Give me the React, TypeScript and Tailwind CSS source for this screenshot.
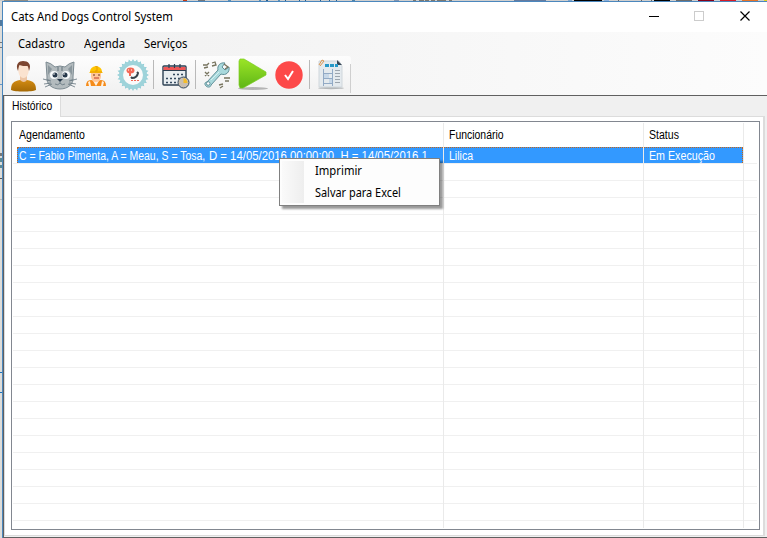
import React from "react";

const topMarks = [
  [4, 24, "#918d85"], [183, 4, "#c33a14"], [198, 7, "#74777b"], [228, 3, "#5a8fb5"], [259, 2, "#5a8fb5"],
  [266, 2, "#285f8d"], [278, 2, "#5a8fb5"], [285, 1, "#285f8d"], [299, 1, "#285f8d"], [305, 1, "#285f8d"],
  [320, 1, "#285f8d"], [329, 1, "#285f8d"], [336, 1, "#285f8d"], [352, 3, "#4c83aa"], [394, 5, "#8395b0"],
  [413, 3, "#7b7870"], [419, 5, "#7b7870"], [425, 4, "#7b7870"], [431, 4, "#7b7870"], [437, 9, "#7b7870"],
  [449, 3, "#7b7870"], [514, 32, "#647b9f"], [568, 4, "#7fa5cc"], [574, 28, "#000000"], [604, 5, "#8ab0dd"],
  [618, 1, "#666666"], [641, 1, "#666666"], [651, 1, "#666666"], [654, 16, "#000000"], [676, 16, "#6b6b6b"],
  [698, 16, "#84001a"], [720, 16, "#d51c28"], [742, 16, "#e6752a"], [764, 3, "#e5d420"],
] as const;

const sideMarks = [
  [20, 6, "#527a9e"], [42, 1, "#777777"], [47, 1, "#777777"], [84, 1, "#6494c4"], [153, 3, "#777777"],
  [158, 4, "#5c8a94"], [165, 3, "#5c8a94"], [178, 1, "#555555"], [199, 1, "#bbbbbb"], [372, 1, "#1e73b9"], [392, 1, "#1e73b9"],
] as const;

const cell = "block w-max origin-left whitespace-pre font-['Liberation_Sans',sans-serif] text-[12px] leading-[16px]";
const ui = "block w-max origin-left whitespace-pre font-['Noto_Sans',sans-serif] text-[12px]";

function Person() {
  return (
    <svg width="28" height="32" viewBox="0 0 28 32">
      <defs><linearGradient id="coat" x2="0" y2="1"><stop stopColor="#d28b12" /><stop offset="1" stopColor="#a66a05" /></linearGradient></defs>
      <path d="M1 30c0-6 2-9 9-10h7c7 1 9 4 9 10-4 2-21 2-25 0Z" fill="url(#coat)" />
      <path d="M10 16h7v4q-3 4-7 0Z" fill="#edc6a7" />
      <path d="M8 7c0-6 11-6 11 0 0 7-2 11-5.500 11S8 14 8 7Z" fill="#fbe3d0" />
      <path d="M8 11C5 4 9 1 13 1c5 0 9 3 6 10-.5-2-.5-4-1.500-5-3 0-6 0-8-1-1 2-1 4-1.500 6Z" fill="#7c4530" />
    </svg>
  );
}

function Cat() {
  return (
    <svg width="34" height="30" viewBox="0 0 34 30">
      <path d="M4 16 3 1q5 1 9 5 5-2 10 0 4-4 9-5l-1 15c1 7-5 12-13 12S3 23 4 16Z" fill="#b3bbbe" stroke="#7d8b92" />
      <path d="m5 4 4 4-4 6Zm24 0-4 4 4 6ZM14 6h2v4h-2Zm4 0h2v4h-2ZM4 18l4 1-4 1Zm26 0-4 1 4 1Z" fill="#8b979d" />
      <circle cx="11" cy="14" r="4" fill="#f7fafb" /><circle cx="23" cy="14" r="4" fill="#f7fafb" />
      <circle cx="12" cy="14" r="2.500" fill="#26384a" /><circle cx="22" cy="14" r="2.500" fill="#26384a" />
      <circle cx="11" cy="13" r=".8" fill="white" /><circle cx="21" cy="13" r=".8" fill="white" />
      <path d="M14 18h6l-3 3Z" fill="#26384a" />
      <path d="M17 20v2q-2 3-5 1m5-1q2 3 5 1M0 18l8 2m-7 3 7-1m-6 4 7-3M34 18l-8 2m7 3-7-1m6 4-7-3" fill="none" stroke="#63747d" strokeWidth=".8" />
    </svg>
  );
}

function Worker() {
  return (
    <svg width="20" height="20" viewBox="0 0 20 20">
      <path d="M0 20q0-6 5-6l5 1 5-1q5 0 5 6Z" fill="#f58b19" />
      <path d="m6 13 4 7 4-7ZM2 16l2-1 1 5H3Zm16 0-2-1-1 5h2Z" fill="#fff1df" />
      <path d="M5 6h10v5q-1 5-5 5t-5-5Z" fill="#ffc799" />
      <path d="M4 6q0-5 6-6 6 1 6 6l1 1H3Z" fill="#ffc400" />
      <path d="M9 0h2v5H9M4 6h12" stroke="#e59a08" fill="none" />
      <path d="M7 9h2m3 0h2" stroke="#6b3521" /><path d="M8 12h5" stroke="#be3c2d" />
    </svg>
  );
}

function Gear() {
  const teeth = Array.from({ length: 24 }, (_, i) => i * 15);
  return (
    <svg width="32" height="32" viewBox="0 0 32 32">
      {teeth.map((a) => <path key={a} d="M14.500 3 16 0l1.500 3Z" fill="#8bcbd4" transform={`rotate(${a} 16 16)`} />)}
      <circle cx="16" cy="16" r="14" fill="#9ed3da" /><circle cx="16" cy="16" r="10" fill="#fafafa" />
      <ellipse cx="13.500" cy="11.500" rx="4" ry="3" fill="#f36856" /><path d="M13 14v3" stroke="#f36856" strokeWidth="2" />
      <path d="M11 11h1m2 0h1" stroke="#fff" />
      <path d="m14 18 1 1q5 0 6-5l-1-1" fill="none" stroke="#37424b" strokeWidth="2" /><path d="M14 21.500h2m1 0h2m1 0h2" stroke="#f36856" />
    </svg>
  );
}

function CalendarClock() {
  return (
    <svg width="28" height="26" viewBox="0 0 28 26">
      <rect x="1" y="3" width="23" height="19" rx="1" fill="#e8edf0" stroke="#2d4053" strokeWidth="1.400" />
      <path d="M1.500 4h22v3h-22Z" fill="#ef5656" /><path d="M1 7.500h23M7 1v4m5.500-4v4M18 1v4" stroke="#2d4053" strokeWidth="1.200" />
      <path d="M11 11.500h11M4 15.500h18M4 19.500h11" stroke="#34495e" strokeWidth="1.600" strokeDasharray="2 2" />
      <circle cx="21.500" cy="19.500" r="5.500" fill="#cabfb0" stroke="#34495e" /><path d="M21.500 20v-5q4 1 4 5Z" fill="#f5bd28" />
    </svg>
  );
}

function Wrench() {
  return (
    <svg width="28" height="28" viewBox="0 0 28 28">
      <path d="m4 21 11-12c-1-4 2-8 7-7l-3 4 3 3 4-3c1 5-3 9-8 7L8 24c0 2-3 3-5 1s-1-4 1-4Z" fill="#a9d9dd" stroke="#608f98" />
      <circle cx="5.200" cy="22.500" r="1.800" fill="#fff" stroke="#608f98" /><path d="m8 19 8-8" stroke="#d5f1f1" />
      <g fill="none" stroke="#77745f" strokeWidth="1.300">
        <path d="M0 4h4l2-2M1 7l4-1M9 2l3-1 1 3-4 1M2 11l4 4m0-4-4 4M21 17h6m-5 3h4m-10 4 4-1m-3 4 3-2M21 3l4 3-3 2" />
      </g>
    </svg>
  );
}

function Play() {
  return (
    <svg width="32" height="33" viewBox="0 0 32 33">
      <defs><linearGradient id="play" x2="0" y2="1"><stop stopColor="#9be426" /><stop offset="1" stopColor="#5fb617" /></linearGradient></defs>
      <ellipse cx="16" cy="30.500" rx="15" ry="1.400" fill="#b4b4b4" />
      <path d="M3 1h4l22 13v3L6 30H3L2 27V3Z" fill="url(#play)" stroke="#7bcc24" strokeWidth=".7" />
    </svg>
  );
}

function Report() {
  return (
    <svg width="28" height="32" viewBox="0 0 28 32">
      <ellipse cx="14" cy="30" rx="13" ry="1.200" fill="#b5b8ba" /><path d="M2 3h20l3 5v21H2Z" fill="#e4eaee" stroke="#d0d7dc" />
      <path d="m20 2 5 5h-5Z" fill="#394856" /><path d="m2 7 3-5 2 1-4 5" fill="none" stroke="#db9550" />
      <path d="M8 7.500h13" stroke="#2698c7" strokeWidth="3" strokeDasharray="4 1" />
      <path d="M6.500 11v17M15.500 11v17M6 15.500h10M6 20.500h10M6 25.500h10" fill="none" stroke="#92aac5" />
      <path d="M7 16h5v4H7Zm5 5h3v4h-3Z" fill="#c7d8e8" /><path d="M18 12.500h5m-5 3h5m-5 3h5m-5 3h5m-5 3h5" stroke="#9ca5ae" />
    </svg>
  );
}

function Divider() {
  return <div className="mt-[4px] h-[29px] w-px shrink-0 bg-[#b9b9b9]" />;
}

export default function App() {
  return (
    <div className="relative h-[538px] w-[767px] overflow-hidden bg-white text-black">
      <div className="relative h-px bg-[#cfcfcf]">
        {topMarks.map(([x, w, c]) => <span key={x} className="absolute top-0 h-px" style={{ left: x, width: w, background: c }} />)}
      </div>
      <div className="flex h-[537px]">
        <aside className="relative w-[2px] shrink-0 bg-[#deddda]">
          {sideMarks.map(([y, h, c]) => <span key={y} className="absolute left-0 w-[2px]" style={{ top: y - 1, height: h, background: c }} />)}
        </aside>
        <main className="flex w-[765px] flex-col border-t border-l border-[#4b87bd]">
          <header className="flex h-[30px] shrink-0 items-center bg-white">
            <h1 className={`${ui} ml-[8px] scale-x-[0.947]`}>Cats And Dogs Control System</h1>
            <svg className="mr-[14px] ml-auto" width="104" height="12" viewBox="0 0 104 12" fill="none" shapeRendering="crispEdges">
              <path d="M0 5.500h10" stroke="#000" /><path d="M45.500 .5h9v9h-9Z" stroke="#ccc" />
              <path d="m91.500 .5 9 9m0-9-9 9" stroke="#000" strokeWidth="1.200" shapeRendering="auto" />
            </svg>
          </header>
          <nav className="flex h-[24px] shrink-0 items-center bg-linear-to-r from-[#f0f0f0] to-[#fcfcfc]">
            <div className="ml-[15px] w-[66px]"><span className={`${ui} scale-x-[0.93]`}>Cadastro</span></div>
            <div className="w-[60px]"><span className={`${ui} scale-x-[0.95]`}>Agenda</span></div>
            <span className={`${ui} scale-x-[0.94]`}>Serviços</span>
          </nav>
          <div className="h-[39px] shrink-0 bg-linear-to-r from-[#f0f0f0] to-[#fcfcfc] pl-[3px]">
            <div className="flex h-[37px] w-[345px] rounded-[3px] bg-linear-to-b from-[#fdfdfd] to-[#f1f1f1] pl-[4px]">
              <div className="mt-[4px] w-[33px]"><Person /></div>
              <div className="mt-[5px] w-[43px]"><Cat /></div>
              <div className="mt-[10px] w-[30px]"><Worker /></div>
              <div className="mt-[3px] w-[37px] pl-px"><Gear /></div>
              <Divider />
              <div className="mt-[7px] ml-[8px] w-[33px]"><CalendarClock /></div>
              <Divider />
              <div className="mt-[5px] ml-[7px] w-[34px]"><Wrench /></div>
              <div className="mt-[2px] w-[38px]"><Play /></div>
              <svg className="mt-[5px]" width="28" height="28" viewBox="0 0 28 28">
                <circle cx="14" cy="14" r="13.700" fill="#fd4949" /><path d="m10 14 3 4 5-8" fill="none" stroke="#fff" strokeWidth="2" />
              </svg>
              <div className="ml-[6px]"><Divider /></div>
              <div className="mt-[2px] ml-[7px]"><Report /></div>
              <div className="mt-[8px] ml-auto h-[29px] w-px bg-[#cfcfcf]" />
            </div>
          </div>
          <section className="flex h-[443px] shrink-0 flex-col border-y border-l border-[#606060] bg-[#f0f0f0]">
            <div className="flex h-[20px] shrink-0 items-end">
              <div className="relative z-10 -mb-px h-[21px] w-[57px] border-r border-l border-[#dcdcdc] bg-white pt-[2px] pl-[7px]">
                <span className={`${cell} scale-x-[0.86]`}>Histórico</span>
              </div>
            </div>
            <div className="h-[420px] w-[761px] border border-r-[2px] border-[#dcdcdc] bg-white pt-[4px] pl-[6px]">
              <div className="relative h-[409px] w-[749px] border border-[#828790] bg-white">
                <div className="flex h-[25px] pt-[5px]">
                  <div className="w-[430px] pl-[7px]"><span className={`${cell} scale-x-[0.88]`}>Agendamento</span></div>
                  <div className="w-[200px] pl-[7px]"><span className={`${cell} scale-x-[0.87]`}>Funcionário</span></div>
                  <div className="pl-[7px]"><span className={`${cell} scale-x-[0.88]`}>Status</span></div>
                </div>
                <div className="ml-px flex h-[17px] w-[744px] border-b border-[#f0f0f0]">
                  <div className="ml-[4px] flex h-[16px] w-[726px] border-t border-r border-l border-dotted border-[#c86414] bg-[#3399ff] text-white">
                    <div className="flex w-[430px] pl-px">
                      <div className="w-[190px]"><span className={`${cell} scale-x-[0.872]`}>{"C = Fabio Pimenta, A = Meau, S = Tosa, "}</span></div>
                      <span className={`${cell} scale-x-[0.945]`}>D = 14/05/2016 00:00:00, H = 14/05/2016 1...</span>
                    </div>
                    <div className="w-[200px] pl-px"><span className={`${cell} scale-x-[0.88]`}>Lilica</span></div>
                    <div className="pl-px"><span className={`${cell} scale-x-[0.89]`}>Em Execução</span></div>
                  </div>
                </div>
                {Array.from({ length: 21 }, (_, i) => <div key={i} className="ml-px h-[17px] w-[744px] border-b border-[#f0f0f0]" />)}
                {[431, 631, 731].map((x) => <div key={x} className="absolute top-px h-[405px] w-px bg-[#eaeaea]" style={{ left: x }} />)}
              </div>
            </div>
          </section>
        </main>
      </div>
      <div className="absolute top-[158px] left-[279px] flex h-[48px] w-[161px] border border-[#808080] bg-[#fdfdfd] p-[2px] shadow-[3px_3px_2px_0px_rgba(0,0,0,0.4)]">
        <div className="w-[22px] bg-linear-to-r from-[#fafafa] to-[#eeeeee]" />
        <div className="ml-[11px]">
          <div className="h-[22px]"><span className={`${ui} scale-x-[0.94] leading-[20px]`}>Imprimir</span></div>
          <div className="h-[22px]"><span className={`${ui} scale-x-[0.91] leading-[20px]`}>Salvar para Excel</span></div>
        </div>
      </div>
    </div>
  );
}
